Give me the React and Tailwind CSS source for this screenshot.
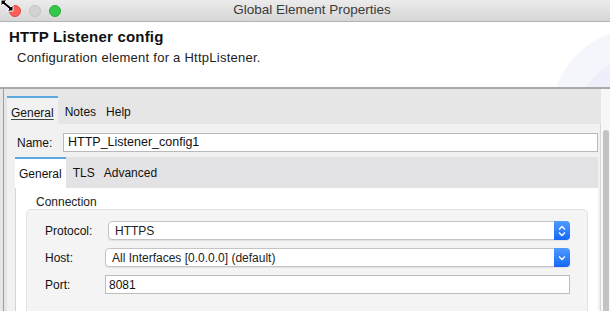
import React from 'react';

const font = { fontFamily: '"Liberation Sans", Arial, sans-serif' };

function TitleBar() {
  return (
    <div className="relative flex h-[22px] shrink-0 items-center border-b border-[#b3b3b3] bg-gradient-to-b from-[#ececec] to-[#d6d6d6]">
      <svg className="absolute left-0 top-0" width="14" height="12" viewBox="0 0 14 12">
        <path d="M1 0 L7 0 L5 2 L11 7 L13 5 L13 11 L7 11 L9 9 L3 4 L1 6 Z" fill="#000" stroke="#fff" strokeWidth="1" />
      </svg>
      <div className="flex items-center gap-[8px] pl-[9px]">
        <span className="h-[12px] w-[12px] rounded-full border border-[#e2463f] bg-[#fc5f57]" />
        <span className="h-[12px] w-[12px] rounded-full border border-[#c4c4c4] bg-[#d3d3d3]" />
        <span className="h-[12px] w-[12px] rounded-full border border-[#2aac3c] bg-[#34c84a]" />
      </div>
      <div className="absolute inset-0 flex items-center justify-center pl-[14px] text-[13.5px] text-[#3b3b3b]">
        Global Element Properties
      </div>
    </div>
  );
}

function Header() {
  return (
    <div className="relative h-[67px] shrink-0 overflow-hidden border-b-2 border-[#a9a9a9] bg-white">
      <div className="absolute left-[551px] top-[6px] h-[180px] w-[230px] rounded-full bg-[#f5f6fc]" />
      <div className="absolute left-[568px] top-[28px] h-[180px] w-[230px] rounded-full bg-[#edf0fa]" />
      <div className="relative pl-[9px] pt-[5px] text-[15px] font-bold leading-[20px] tracking-[0.2px] text-[#111]">
        HTTP Listener config
      </div>
      <div className="relative pl-[17px] pt-[1px] text-[13px] tracking-[0.25px] text-[#222]">
        Configuration element for a HttpListener.
      </div>
    </div>
  );
}

function SelectBox({ value, double }) {
  return (
    <div className="flex h-[19px] flex-1 items-center rounded-[4px] border border-[#c4c4c4] bg-white shadow-[0_1px_1px_rgba(0,0,0,0.08)]">
      <span className="flex-1 pl-[6px] text-[12px] text-[#222]">{value}</span>
      <span className="-my-px -mr-px flex h-[19px] w-[16px] items-center justify-center rounded-r-[4px] bg-gradient-to-b from-[#4f9bff] to-[#1467f5]">
        {double ? (
          <svg width="8" height="12" viewBox="0 0 8 12" fill="none" stroke="#fff" strokeWidth="1.3">
            <path d="M1 4.5 L4 1.5 L7 4.5" />
            <path d="M1 7.5 L4 10.5 L7 7.5" />
          </svg>
        ) : (
          <svg width="8" height="6" viewBox="0 0 8 6" fill="none" stroke="#fff" strokeWidth="1.3">
            <path d="M1 1.5 L4 4.5 L7 1.5" />
          </svg>
        )}
      </span>
    </div>
  );
}

export default function App() {
  return (
    <div className="relative flex h-[311px] w-[610px] flex-col overflow-hidden bg-[#e6e6e6]" style={font}>
      <TitleBar />
      <Header />
      <div className="ml-[3px] flex min-h-0 flex-1 overflow-hidden border-l border-[#9d9d9d]">
        <div className="flex min-w-0 flex-1 flex-col pl-[3px] pt-[7px]">
          {/* outer tabs */}
          <div className="flex h-[28px] shrink-0 items-stretch text-[12px] text-[#111]">
            <div className="flex items-center border-t-2 border-[#5aa8de] bg-[#f1f1f1] px-[4px] pt-[3px]">
              <span className="underline decoration-[#444] underline-offset-2">General</span>
            </div>
            <div className="flex items-center px-[7px] pt-[3px]">Notes</div>
            <div className="flex items-center px-[3px] pt-[3px]">Help</div>
          </div>
          <div className="flex shrink-0 flex-col border-r border-[#d8d8d8] bg-[#f1f1f1] pb-[40px] pr-[2px]">
            <div className="flex shrink-0 items-center pl-[10px] pt-[9px] text-[12px] text-[#111]">
              <span className="w-[46px]">Name:</span>
              <div className="flex h-[19px] flex-1 items-center border border-[#b9b9b9] bg-white pl-[4px] text-[12.5px]">
                HTTP_Listener_config1
              </div>
            </div>
            {/* inner tab folder */}
            <div className="ml-[8px] mt-[5px] flex shrink-0 flex-col">
              <div className="flex h-[31px] shrink-0 items-stretch bg-[#e3e3e5] text-[12px] text-[#111]">
                <div className="flex items-center border-t-2 border-[#5aa8de] bg-white px-[4px]">General</div>
                <div className="flex items-center px-[7px]">TLS</div>
                <div className="flex items-center px-[2px]">Advanced</div>
              </div>
              <div className="shrink-0 border-l border-[#d5d5d5] bg-white pl-[10px] pr-[10px]">
                <div className="pl-[10px] pt-[7px] text-[12px] leading-[14px] text-[#222]">Connection</div>
                <div className="h-[120px] rounded-[5px] border border-[#e1e1e1] bg-[#f4f4f4] pl-[18px] pr-[17px] pt-[11px] text-[12px] text-[#111]">
                  <div className="flex items-center">
                    <span className="w-[63px]">Protocol:</span>
                    <SelectBox value="HTTPS" double />
                  </div>
                  <div className="mt-[8px] flex items-center">
                    <span className="w-[60px]">Host:</span>
                    <SelectBox value="All Interfaces [0.0.0.0] (default)" />
                  </div>
                  <div className="mt-[8px] flex items-center">
                    <span className="w-[60px]">Port:</span>
                    <div className="flex h-[19px] flex-1 items-center border border-[#bdbdbd] bg-white pl-[3px]">8081</div>
                  </div>
                </div>
              </div>
            </div>
          </div>
        </div>
        <div className="flex w-[9px] shrink-0 bg-[#f7f7f7] pl-[2px] pt-[41px]">
          <div className="h-[200px] w-[6px] rounded-t-[3px] bg-[#c3c3c3]" />
        </div>
      </div>
    </div>
  );
}
